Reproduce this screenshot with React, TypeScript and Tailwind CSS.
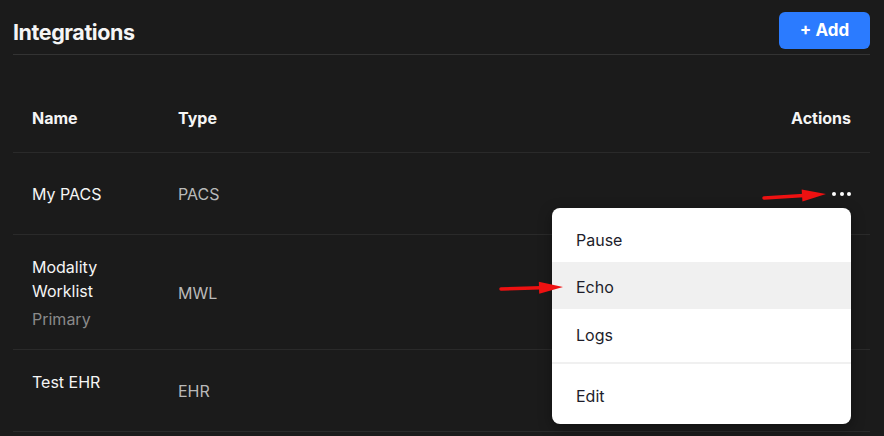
type Row = {
  name: string[]
  sub?: string
  type: string
  h: string
  namePad?: string
}

const rows: Row[] = [
  { name: ['My PACS'], type: 'PACS', h: 'h-[82px]' },
  { name: ['Modality', 'Worklist'], sub: 'Primary', type: 'MWL', h: 'h-[115px]' },
  { name: ['Test EHR'], type: 'EHR', h: 'h-[82px]', namePad: 'pb-[18px]' },
]

function Arrow({ className, x1, y1, x2, y2 }: { className: string; x1: number; y1: number; x2: number; y2: number }) {
  const dx = x2 - x1
  const dy = y2 - y1
  const len = Math.hypot(dx, dy)
  const ux = dx / len
  const uy = dy / len
  const head = 24
  const bx = x2 - ux * head
  const by = y2 - uy * head
  const w = 6
  return (
    <svg className={className} width="884" height="436" viewBox="0 0 884 436">
      <line x1={x1} y1={y1} x2={bx + ux * 2} y2={by + uy * 2} stroke="#ee1111" strokeWidth="3.5" strokeLinecap="round" />
      <polygon
        points={`${x2},${y2} ${bx - uy * w},${by + ux * w} ${bx + uy * w},${by - ux * w}`}
        fill="#ee1111"
      />
    </svg>
  )
}

function RowMenu() {
  const item = 'flex h-[47px] items-center px-6 pt-[2px] text-base text-[#1d1d2b]'
  return (
    <div className="absolute right-[19px] top-[55px] z-10 w-[299px] rounded-lg bg-white py-[7px] shadow-[0_4px_14px_rgba(0,0,0,0.35)]">
      <div className={item}>Pause</div>
      <div className={`${item} bg-[#f0f0f0]`}>Echo</div>
      <div className={`${item} pt-[5px]`}>Logs</div>
      <div className="my-[6px] h-[2px] bg-[#f0f0f0]" />
      <div className={`${item} pt-[4px]`}>Edit</div>
    </div>
  )
}

function Dots() {
  return (
    <div className="flex items-center gap-[3.5px]">
      <span className="h-[4px] w-[4px] rounded-full bg-white" />
      <span className="h-[4px] w-[4px] rounded-full bg-white" />
      <span className="h-[4px] w-[4px] rounded-full bg-white" />
    </div>
  )
}

export default function App() {
  return (
    <div className="relative h-[436px] w-[884px] overflow-hidden bg-[#1b1b1b] pl-[13px] pr-[14px] font-['Inter',sans-serif] text-[#f5f5f5]">
      <div className="flex h-[55px] items-start justify-between border-b border-[#333333] pt-[12px]">
        <h1 className="mt-[4px] text-[21.5px] font-bold tracking-[-0.02em]">Integrations</h1>
        <button className="flex h-[37px] w-[91px] items-center justify-center rounded-md bg-[#2b7bff] text-[17px] font-bold text-white">
          + Add
        </button>
      </div>

      <div className="mt-[29px]">
        <div className="flex h-[69px] items-center border-b border-[#2a2a2a] px-[19px] text-base font-bold">
          <div className="w-[146px]">Name</div>
          <div className="flex-1">Type</div>
          <div>Actions</div>
        </div>

        {rows.map((r, i) => (
          <div key={r.type} className={`relative flex items-center border-b border-[#2a2a2a] px-[19px] text-base ${r.h}`}>
            <div className={`w-[146px] pt-[1px] ${r.namePad ?? ''}`}>
              {r.name.map((n) => (
                <div key={n} className="leading-6">{n}</div>
              ))}
              {r.sub && <div className="mt-1 leading-6 text-[#8a8a8a]">{r.sub}</div>}
            </div>
            <div className="flex-1 pt-[1px] text-[#b9b9b9]">{r.type}</div>
            {i === 0 && (
              <>
                <Dots />
                <RowMenu />
              </>
            )}
          </div>
        ))}
      </div>

      <Arrow className="pointer-events-none absolute left-0 top-0 z-20" x1={764} y1={198} x2={826} y2={194} />
      <Arrow className="pointer-events-none absolute left-0 top-0 z-20" x1={501} y1={289} x2={563} y2={287} />
    </div>
  )
}
